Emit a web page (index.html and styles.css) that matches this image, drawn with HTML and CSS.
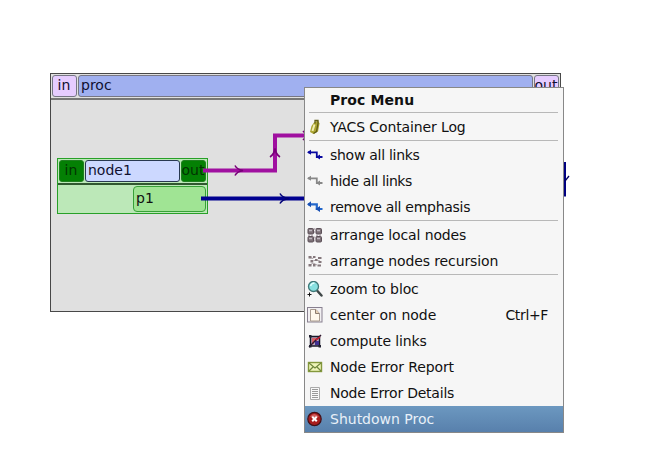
FILE: index.html
```
<!DOCTYPE html>
<html lang="en">
<head>
<meta charset="utf-8">
<title>Proc schema</title>
<link rel="stylesheet" href="styles.css">
</head>
<body>
<main class="canvas">
  <section class="proc">
    <header class="proc-head">
      <span class="port">in</span>
      <span class="proc-name">proc</span>
      <span class="port">out</span>
    </header>
  </section>
  <section class="node">
    <div class="node-head">
      <span class="gate">in</span>
      <span class="node-name">node1</span>
      <span class="gate out">out</span>
    </div>
    <div class="node-body"><span class="node-port">p1</span></div>
  </section>
  <svg class="links" width="648" height="454" fill="none">
    <path d="M203 170.500H275V135.500H306" stroke="#a010a0" stroke-width="4"/>
    <path d="M235 165.500Q237 169.500 243 170.500Q237 171.500 235 175.500M270 157Q274 154.500 275 148.500Q276 154.500 280 157M303 131l3 3M303 140l3-3" stroke="#780078" stroke-width="1.600"/>
    <path d="M201 198.500H306" stroke="#000090" stroke-width="4"/>
    <path d="M280 193.500Q282 197.500 289 198.500Q282 199.500 280 203.500" stroke="#000078" stroke-width="1.600"/>
    <path d="M564.500 162V196.500" stroke="#000080" stroke-width="3"/>
    <path d="M565 181l4-5" stroke="#000060" stroke-width="1.300"/>
  </svg>

  <nav class="menu">
    <div class="title">Proc Menu</div>
    <hr>
    <div class="item">
      <svg class="icon" viewBox="0 0 16 16"><path d="M7 3.500l4-2 1.500 3-1.500 8-4.500 2.500-3.500-2 1.500-6z" fill="#aaa430"/><path d="M7.500 5.500L5.500 12" stroke="#f2eeb0" stroke-width="2"/><path d="M11 4.500l-1.500 8-3 2M8 4.500V1.500h3v3" fill="none" stroke="#605c18" stroke-width="1.300"/></svg>
      <span>YACS Container Log</span>
    </div>
    <hr>
    <div class="item tight">
      <svg class="icon" viewBox="0 0 16 16"><path d="M1 5.300h8.800v4.700h5.700" fill="none" stroke="#0808a0" stroke-width="1.800"/><path d="M0 5.300l4-2.500v5zM9 10l4-2.500v5z" fill="#0808a0"/></svg>
      <span>show all links</span>
    </div>
    <div class="item tighter">
      <svg class="icon" viewBox="0 0 16 16"><path d="M1 5.300h8.800v4.700h5.700" fill="none" stroke="#888" stroke-width="1.800"/><path d="M0 5.300l4-2.500v5zM9 10l4-2.500v5z" fill="#888"/></svg>
      <span>hide all links</span>
    </div>
    <div class="item tight">
      <svg class="icon" viewBox="0 0 16 16"><path d="M1 5.300h8.800v4.700h5.700" fill="none" stroke="#2468cc" stroke-width="2.200"/><path d="M0 5.300l4-3v6zM8.500 10l4.500-3v6z" fill="#1850b4"/></svg>
      <span>remove all emphasis</span>
    </div>
    <hr>
    <div class="item">
      <svg class="icon" viewBox="0 0 16 16"><g fill="#7c7076" stroke="#5c5058"><rect x="1" y="1.500" width="5.500" height="5.500" rx="1"/><rect x="9" y="1.500" width="5.500" height="5.500" rx="1"/><rect x="1" y="9.500" width="5.500" height="5.500" rx="1"/><rect x="9" y="9.500" width="5.500" height="5.500" rx="1"/></g><path d="M2 3.500h3M10 3.500h3M2 11.500h3M10 11.500h3" stroke="#c0b8c0" stroke-width="1.500"/><path d="M7.800 1v5M7.800 9.500v6M1 8.200h5M9 8.200h6" stroke="#a89ca4" stroke-dasharray="2 1"/></svg>
      <span>arrange local nodes</span>
    </div>
    <div class="item">
      <svg class="icon" viewBox="0 0 16 16"><path d="M3 4.500l3 1 1-2M6 8l3-1 4 1M3 12l3-2 4 2" fill="none" stroke="#aaa0a4"/><g fill="#85787c"><rect x="1.500" y="3" width="3" height="2.500"/><rect x="6" y="3" width="2.500" height="2"/><rect x="11" y="4" width="3.500" height="2"/><rect x="3.500" y="7" width="2.500" height="2.500"/><rect x="8" y="6" width="2.500" height="2"/><rect x="11.500" y="8" width="3" height="2"/><rect x="1.500" y="11" width="3" height="2.500"/><rect x="6" y="11" width="2.500" height="2.500"/><rect x="10.500" y="11.500" width="3.500" height="2"/></g></svg>
      <span>arrange nodes recursion</span>
    </div>
    <hr>
    <div class="item">
      <svg class="icon" viewBox="0 0 16 16"><path d="M10.500 10l4 4.500" stroke="#404848" stroke-width="2.500" stroke-linecap="round"/><circle cx="6.500" cy="5.500" r="5" fill="#88e0e0" stroke="#407878" stroke-width="1.300"/><path d="M3.500 5q1-3 4-3" stroke="#e0ffff" stroke-width="1.500" fill="none"/><path d="M.5 13.500h4M2.500 11.500v4" stroke="#111"/></svg>
      <span>zoom to bloc</span>
    </div>
    <div class="item">
      <svg class="icon" viewBox="0 0 16 16"><rect x=".5" y=".5" width="14.500" height="14.500" fill="#f2f0f2" stroke="#888090"/><path d="M3.500 2.500h5.500l3.500 4V14h-9z" fill="#fff8ec" stroke="#aa9c90"/><path d="M8.500 2.500v4h4" fill="#e8d0b4" stroke="#8c7c70"/></svg>
      <span class="wide">center on node</span><span class="key">Ctrl+F</span>
    </div>
    <div class="item">
      <svg class="icon" viewBox="0 0 16 16"><rect x="3.500" y="3.500" width="9" height="9.500" fill="#b4a8c0" stroke="#181828" stroke-width="1.500"/><path d="M5 5h5v3H7v3H5z" fill="#d86068"/><path d="M8 8h4v4H8z" fill="#403090"/><path d="M2 14L14 2" stroke="#301830" stroke-width="1.500"/><path d="M2 2h2.500v2.500H2zM2 12h2.500v2.500H2zM11.500 12H14v2.500h-2.500z" fill="#202030"/><path d="M9 7l4-3" stroke="#d02030" stroke-width="1.500"/></svg>
      <span>compute links</span>
    </div>
    <div class="item">
      <svg class="icon" viewBox="0 0 16 16"><rect x="1.500" y="3.500" width="13" height="9" fill="#eef4b8" stroke="#84983c" stroke-width="1.400"/><path d="M2 4l6 5 6-5M2 12l4-4M14 12l-4-4" fill="none" stroke="#70883c" stroke-width="1.200"/></svg>
      <span>Node Error Report</span>
    </div>
    <div class="item details">
      <svg class="icon" viewBox="0 0 16 16"><path d="M3.500 2.500h9v12h-9z" fill="#f8f8f8" stroke="#aaa"/><path d="M5 4.500h6M5 6.500h6M5 8.500h6M5 10.500h6M5 12.500h6" stroke="#999"/></svg>
      <span>Node Error Details</span>
    </div>
    <div class="item active">
      <svg class="icon" viewBox="0 0 16 16"><circle cx="7.500" cy="8" r="6.700" fill="#a81c1c" stroke="#401018" stroke-width="1.200"/><path d="M3 6q4-6 9 0" fill="#d06060"/><path d="M5.200 5.700l4.600 4.600M9.800 5.700l-4.600 4.600" stroke="#fff" stroke-width="2"/></svg>
      <span class="wide">Shutdown Proc</span>
    </div>
  </nav>
</main>
</body>
</html>
```

FILE: styles.css
```
* { box-sizing: border-box; }
body { margin: 0; background: #fff; font: 14px/20px "DejaVu Sans", sans-serif; color: #111; }
.canvas { position: relative; width: 648px; height: 454px; overflow: hidden; }

.proc { position: absolute; left: 50px; top: 73px; width: 511px; height: 239px; background: #e0e0e0; border: 1px solid #484848; }
.proc-head { display: flex; gap: 1px; height: 26px; padding: 1px 1px 2px; border-bottom: 2px solid #777; color: #101030; }
.proc-head span { height: 22px; border: 1px solid #777785; border-radius: 3px; line-height: 18px; white-space: nowrap; }
.proc-head .port { width: 25px; background: #e6ccff; text-align: center; text-indent: -1px; }
.proc-head .proc-name { flex: 1; padding-left: 2px; background: #a0b0f0; }

.node { position: absolute; left: 57px; top: 158px; width: 151px; height: 56px; background: #bce8b8; border: 1px solid #28a028; }
.node-head { display: flex; gap: 1px; height: 26px; padding: 1px; border-bottom: 2px solid #305830; }
.node-head span { height: 22px; border-radius: 3px; border: 1px solid #208020; line-height: 19px; }
.node-head .gate { width: 25px; background: #048004; color: #023402; text-align: center; text-indent: -1px; }
.node-head .node-name { flex: 1; padding-left: 2px; background: #ccd8ff; border-color: #283850; color: #101030; }
.node-body { display: flex; justify-content: flex-end; padding: 1px; }
.node-port { width: 73px; height: 26px; padding-left: 2px; line-height: 23px; background: #a0e494; border: 1px solid #38a038; border-radius: 4px; }

.links { position: absolute; left: 0; top: 0; }

.menu { position: absolute; left: 304px; top: 87px; width: 260px; height: 346px; background: #f6f6f6; border: 1px solid #888; }
.title { height: 24px; padding-left: 25px; line-height: 24px; font-weight: bold; letter-spacing: .1px; }
.menu hr { height: 2px; margin: 0 5px 0 4px; border: 0; border-top: 1px solid #b8b8b8; }
.item { display: flex; align-items: center; height: 26px; padding: 0 15px 0 2px; letter-spacing: -.12px; }
.tight { letter-spacing: -.28px; }
.tighter { letter-spacing: -.4px; }
.details { letter-spacing: -.22px; }
.wide { letter-spacing: 0; }
.icon { width: 16px; height: 16px; margin-right: 7px; flex: none; }
.key { margin-left: auto; letter-spacing: -.35px; }
.active { color: #e8f0f8; background: linear-gradient(#6c98c0, #5880ac); }
```
